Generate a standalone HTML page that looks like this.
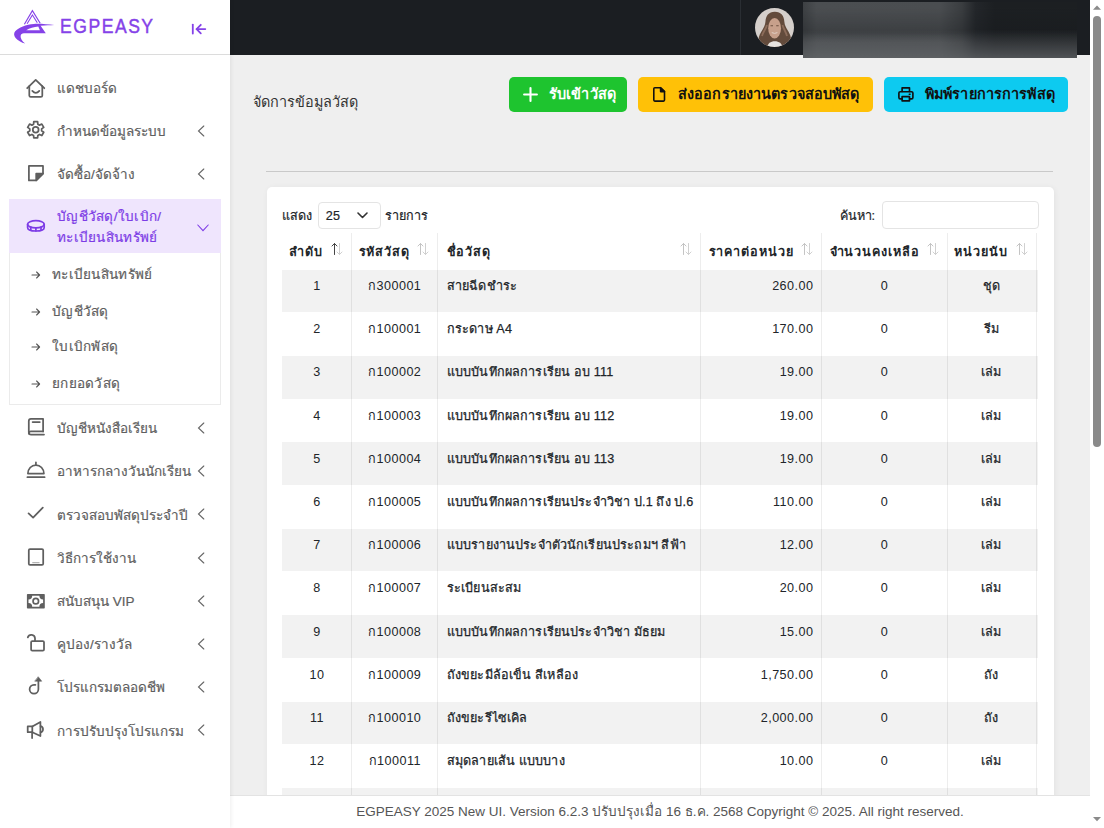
<!DOCTYPE html>
<html><head><meta charset="utf-8">
<style>
*{box-sizing:border-box;margin:0;padding:0}
html,body{width:1104px;height:828px;overflow:hidden}
body{position:relative;background:#efefef;font-family:"Liberation Sans",sans-serif;color:#212529}
.abs{position:absolute}
#sb{position:absolute;left:0;top:0;width:230px;height:828px;background:#fff;box-shadow:1px 0 4px rgba(0,0,0,0.07);z-index:2}
#sbh{position:absolute;left:0;top:0;width:230px;height:54.5px;border-bottom:1px solid #dcdcdc}
.logo-t{position:absolute;left:60.3px;top:12px;font-size:20.2px;line-height:28px;color:#8542e8;letter-spacing:1.75px;-webkit-text-stroke:0.45px #8542e8;transform:scaleX(0.87);transform-origin:0 0}
.mi{position:absolute;left:57px;font-size:13.5px;line-height:20px;color:#5f5f5f;white-space:nowrap;-webkit-text-stroke:0.2px currentColor}
.sub{position:absolute;left:52px;letter-spacing:0.3px;font-size:13.5px;line-height:20px;color:#5f5f5f;white-space:nowrap;-webkit-text-stroke:0.2px currentColor}
#top{position:absolute;left:230px;top:0;width:860px;height:54.5px;background:#1b1e22}
#foot{position:absolute;left:230px;top:795px;width:860px;height:33px;background:#fff;border-top:1px solid #e3e3e3;font-size:13.5px;color:#555;text-align:center;line-height:31px}
#scr{position:absolute;left:1090px;top:0;width:14px;height:828px;background:#fff}
.btn{position:absolute;top:77px;height:35px;border-radius:5px;font-size:14.4px;font-weight:bold;line-height:35px;white-space:nowrap;letter-spacing:0.12px}
#card{position:absolute;left:267px;top:186.6px;width:786.5px;height:620px;background:#fff;border-radius:5px;box-shadow:1px 1px 6px rgba(0,0,0,0.06)}
.th{position:absolute;font-size:12.6px;line-height:20px;font-weight:bold;color:#212529;white-space:nowrap;letter-spacing:0.9px}
.td{position:absolute;font-size:12.6px;line-height:20px;color:#212529;white-space:nowrap}
.lbl{font-size:12.6px;line-height:20px;color:#212529;white-space:nowrap;-webkit-text-stroke:0.2px #212529}
.td.c{text-align:center}.td.r{text-align:right}
.td.n{letter-spacing:0.45px}.td.t{letter-spacing:0.15px;-webkit-text-stroke:0.25px #212529}
</style></head><body>
<div id="sb">
<div id="sbh"></div>
<svg class="abs" style="left:0;top:0" width="60" height="54" viewBox="0 0 60 54">
<path d="M24.4 24.3L32.4 10.6 40.2 23.2" fill="none" stroke="#8542e8" stroke-width="1.15" stroke-linejoin="miter"/>
<path d="M27.1 23.7L32.4 14.9 37.3 22.8" fill="none" stroke="#8542e8" stroke-width="1.05" stroke-linejoin="miter"/>
<path fill-rule="evenodd" fill="#8542e8" d="M54.2 25.1C48 24.3 40 23.6 34 23.9C26 24.4 18.5 27.5 15.2 31.2C13.6 33 13.8 35.8 15.6 38C17.6 40.5 21.5 42.6 25.2 43.6C22 41 20.4 38.4 20.6 36C20.8 34.3 22 33.3 24 33.3H45.8L38.4 22.6 40.6 25.8C46 25.5 50 25.3 54.2 25.1ZM26.2 30.2C29.5 28.2 34 26.9 38.3 26.5L39.9 30.2Z"/>
</svg>
<div class="logo-t">EGPEASY</div>
<svg class="abs" style="left:190px;top:22px" width="18" height="14" viewBox="190 22 18 14" fill="none" stroke="#8542e8" stroke-width="1.8" stroke-linecap="round" stroke-linejoin="round"><path d="M192.8 24.6V33.6"/><path d="M196.6 29.1H205.3"/><path d="M200.8 24.8L196.6 29.1 200.8 33.4"/></svg>
<div class="abs" style="left:9px;top:199px;width:212px;height:205.5px;border:1px solid #ebebeb;border-top:none"></div>
<div class="abs" style="left:9px;top:199px;width:212px;height:54px;background:#efe5fd"></div>
<svg class="abs" style="left:22px;top:212px" width="28" height="28" viewBox="22 212 28 28" fill="none" stroke="#7d3ce6" stroke-width="1.7" stroke-linecap="round" stroke-linejoin="round"><path d="M27.6 224.3A8.3 3.6 0 0 1 44.2 224.3A8.3 3.6 0 0 1 27.6 224.3Z"/><path d="M27.6 224.3V227.4Q27.6 231 35.9 231Q44.2 231 44.2 227.4V224.3"/><path d="M30.8 227.2V230.2M35.9 227.9V231M41 227.2V230.2"/></svg>
<div class="mi" style="top:205.5px;color:#7d3ce6;line-height:21px;letter-spacing:0.3px">บัญชีวัสดุ/ใบเบิก/<br>ทะเบียนสินทรัพย์</div>
<svg class="abs" style="left:196px;top:222px" width="14" height="12" viewBox="196 222 14 12" fill="none" stroke="#7d3ce6" stroke-width="1.1" stroke-linecap="round"><path d="M197.8 225L203 230.6 208.2 225"/></svg>
<svg class="abs" style="left:22px;top:74px" width="28" height="28" viewBox="22 74 28 28" fill="none" stroke="#5f5f5f" stroke-width="1.75" stroke-linecap="round" stroke-linejoin="round"><path d="M27.2 88.2L35.7 79.9 44.3 88.2"/><path d="M29.3 86.2V95.4Q29.3 96.9 30.8 96.9H40.8Q42.3 96.9 42.3 95.4V86.2"/><path d="M32.3 90.9Q35.8 94.9 39.3 90.9"/></svg>
<div class="mi" style="top:79.0px">แดชบอร์ด</div>
<svg class="abs" style="left:22px;top:116px" width="28" height="28" viewBox="22 116 28 28" fill="none" stroke="#5f5f5f" stroke-width="1.75" stroke-linecap="round" stroke-linejoin="round"><path d="M33.55 124.20 L33.81 121.62 L37.59 121.62 L37.85 124.20 L39.48 125.14 L41.84 124.07 L43.73 127.34 L41.63 128.86 L41.63 130.74 L43.73 132.26 L41.84 135.53 L39.48 134.46 L37.85 135.40 L37.59 137.98 L33.81 137.98 L33.55 135.40 L31.92 134.46 L29.56 135.53 L27.67 132.26 L29.77 130.74 L29.77 128.86 L27.67 127.34 L29.56 124.07 L31.92 125.14Z"/><circle cx="35.7" cy="129.8" r="2.9"/></svg>
<div class="mi" style="top:122.2px">กำหนดข้อมูลระบบ</div>
<svg class="abs" style="left:194px;top:123.0px" width="14" height="16" viewBox="194 123.0 14 16" fill="none" stroke="#666" stroke-width="1.1" stroke-linecap="round"><path d="M203.8 126.0L198.5 131.0 203.8 136.0"/></svg>
<svg class="abs" style="left:22px;top:159px" width="28" height="28" viewBox="22 159 28 28" fill="none" stroke="#5f5f5f" stroke-width="1.75" stroke-linecap="round" stroke-linejoin="round"><path d="M28.9 165.9H43V173.6L36.2 180.4H28.9Z"/><path d="M36.2 173.6H43L36.2 180.4Z" fill="#5f5f5f"/></svg>
<div class="mi" style="top:165.4px">จัดซื้อ/จัดจ้าง</div>
<svg class="abs" style="left:194px;top:166.2px" width="14" height="16" viewBox="194 166.2 14 16" fill="none" stroke="#666" stroke-width="1.1" stroke-linecap="round"><path d="M203.8 169.2L198.5 174.2 203.8 179.2"/></svg>
<svg class="abs" style="left:22px;top:412px" width="28" height="28" viewBox="22 412 28 28" fill="none" stroke="#5f5f5f" stroke-width="1.75" stroke-linecap="round" stroke-linejoin="round"><path d="M43.1 431.4V418.8H31Q28.8 418.8 28.8 421V432.2Q28.8 434.6 31.2 434.6H44"/><path d="M28.8 433.6Q28.8 431.4 31 431.4H43.1"/><path d="M32.6 422.1H39.8"/></svg>
<div class="mi" style="top:419.2px">บัญชีหนังสือเรียน</div>
<svg class="abs" style="left:194px;top:420.0px" width="14" height="16" viewBox="194 420.0 14 16" fill="none" stroke="#666" stroke-width="1.1" stroke-linecap="round"><path d="M203.8 423.0L198.5 428.0 203.8 433.0"/></svg>
<svg class="abs" style="left:22px;top:456px" width="28" height="28" viewBox="22 456 28 28" fill="none" stroke="#5f5f5f" stroke-width="1.75" stroke-linecap="round" stroke-linejoin="round"><path d="M27.9 473.6A8 8.6 0 0 1 43.9 473.6Z"/><path d="M35.9 462.4V464.8"/><path d="M27.4 477.2H44.6"/></svg>
<div class="mi" style="top:462.4px">อาหารกลางวันนักเรียน</div>
<svg class="abs" style="left:194px;top:463.2px" width="14" height="16" viewBox="194 463.2 14 16" fill="none" stroke="#666" stroke-width="1.1" stroke-linecap="round"><path d="M203.8 466.2L198.5 471.2 203.8 476.2"/></svg>
<svg class="abs" style="left:22px;top:498px" width="28" height="28" viewBox="22 498 28 28" fill="none" stroke="#5f5f5f" stroke-width="1.75" stroke-linecap="round" stroke-linejoin="round"><path d="M28.6 513.4L33.1 517.6 42.8 507.6"/></svg>
<div class="mi" style="top:505.6px">ตรวจสอบพัสดุประจำปี</div>
<svg class="abs" style="left:194px;top:506.4px" width="14" height="16" viewBox="194 506.4 14 16" fill="none" stroke="#666" stroke-width="1.1" stroke-linecap="round"><path d="M203.8 509.4L198.5 514.4 203.8 519.4"/></svg>
<svg class="abs" style="left:22px;top:543px" width="28" height="28" viewBox="22 543 28 28" fill="none" stroke="#5f5f5f" stroke-width="1.75" stroke-linecap="round" stroke-linejoin="round"><rect x="28.8" y="549" width="14.4" height="15.9" rx="1.2"/><path d="M32.8 562.7H39" stroke="#b5b5b5" stroke-width="1.3"/></svg>
<div class="mi" style="top:548.8px">วิธีการใช้งาน</div>
<svg class="abs" style="left:194px;top:549.6px" width="14" height="16" viewBox="194 549.6 14 16" fill="none" stroke="#666" stroke-width="1.1" stroke-linecap="round"><path d="M203.8 552.6L198.5 557.6 203.8 562.6"/></svg>
<svg class="abs" style="left:22px;top:587px" width="28" height="28" viewBox="22 587 28 28" fill="none" stroke="#5f5f5f" stroke-width="1.75" stroke-linecap="round" stroke-linejoin="round"><rect x="26.9" y="593.9" width="17.9" height="14.7" rx="0.8" fill="#5f5f5f" stroke="none"/><path d="M32.2 595.7H39.4A3.7 3.7 0 0 0 43.1 599.4V603A3.7 3.7 0 0 0 39.4 606.8H32.2A3.7 3.7 0 0 0 28.5 603V599.4A3.7 3.7 0 0 0 32.2 595.7Z" fill="#fff" stroke="none"/><circle cx="35.8" cy="601.2" r="2.75" stroke-width="1.7"/></svg>
<div class="mi" style="top:592.0px">สนับสนุน VIP</div>
<svg class="abs" style="left:194px;top:592.8px" width="14" height="16" viewBox="194 592.8 14 16" fill="none" stroke="#666" stroke-width="1.1" stroke-linecap="round"><path d="M203.8 595.8L198.5 600.8 203.8 605.8"/></svg>
<svg class="abs" style="left:22px;top:629px" width="28" height="28" viewBox="22 629 28 28" fill="none" stroke="#5f5f5f" stroke-width="1.75" stroke-linecap="round" stroke-linejoin="round"><rect x="31.1" y="641" width="12.9" height="9.7" rx="1.2"/><path d="M35 641V638.3A3.7 3.7 0 0 0 27.8 637.4"/></svg>
<div class="mi" style="top:635.2px">คูปอง/รางวัล</div>
<svg class="abs" style="left:194px;top:636.0px" width="14" height="16" viewBox="194 636.0 14 16" fill="none" stroke="#666" stroke-width="1.1" stroke-linecap="round"><path d="M203.8 639.0L198.5 644.0 203.8 649.0"/></svg>
<svg class="abs" style="left:22px;top:672px" width="28" height="28" viewBox="22 672 28 28" fill="none" stroke="#5f5f5f" stroke-width="1.75" stroke-linecap="round" stroke-linejoin="round"><path d="M35.4 684.8H34A4.4 4.4 0 1 0 38.4 689.2V680.5"/><path d="M38.4 677L41.7 681.2H35.1Z" fill="#5f5f5f" stroke-width="0.6"/></svg>
<div class="mi" style="top:678.4px">โปรแกรมตลอดชีพ</div>
<svg class="abs" style="left:194px;top:679.2px" width="14" height="16" viewBox="194 679.2 14 16" fill="none" stroke="#666" stroke-width="1.1" stroke-linecap="round"><path d="M203.8 682.2L198.5 687.2 203.8 692.2"/></svg>
<svg class="abs" style="left:22px;top:716px" width="28" height="28" viewBox="22 716 28 28" fill="none" stroke="#5f5f5f" stroke-width="1.75" stroke-linecap="round" stroke-linejoin="round"><path d="M27.7 726.4H32.3V732.2H27.7Z"/><path d="M32.3 726.4L40.4 721.9V736L32.3 732.2"/><path d="M32.1 732.6V738"/><path d="M40.6 726.2A3.2 3.2 0 0 1 40.6 732.4"/></svg>
<div class="mi" style="top:721.6px">การปรับปรุงโปรแกรม</div>
<svg class="abs" style="left:194px;top:722.4px" width="14" height="16" viewBox="194 722.4 14 16" fill="none" stroke="#666" stroke-width="1.1" stroke-linecap="round"><path d="M203.8 725.4L198.5 730.4 203.8 735.4"/></svg>
<svg class="abs" style="left:28px;top:269.2px" width="14" height="12" viewBox="28 269.2 14 12" fill="none" stroke="#555" stroke-width="1.1" stroke-linecap="round" stroke-linejoin="round"><path d="M32 275.2H39.5M36.6 272.2L39.6 275.2 36.6 278.2"/></svg>
<div class="sub" style="top:265.2px">ทะเบียนสินทรัพย์</div>
<svg class="abs" style="left:28px;top:305.5px" width="14" height="12" viewBox="28 305.5 14 12" fill="none" stroke="#555" stroke-width="1.1" stroke-linecap="round" stroke-linejoin="round"><path d="M32 311.5H39.5M36.6 308.5L39.6 311.5 36.6 314.5"/></svg>
<div class="sub" style="top:301.5px">บัญชีวัสดุ</div>
<svg class="abs" style="left:28px;top:341.4px" width="14" height="12" viewBox="28 341.4 14 12" fill="none" stroke="#555" stroke-width="1.1" stroke-linecap="round" stroke-linejoin="round"><path d="M32 347.4H39.5M36.6 344.4L39.6 347.4 36.6 350.4"/></svg>
<div class="sub" style="top:337.4px">ใบเบิกพัสดุ</div>
<svg class="abs" style="left:28px;top:377.6px" width="14" height="12" viewBox="28 377.6 14 12" fill="none" stroke="#555" stroke-width="1.1" stroke-linecap="round" stroke-linejoin="round"><path d="M32 383.6H39.5M36.6 380.6L39.6 383.6 36.6 386.6"/></svg>
<div class="sub" style="top:373.6px">ยกยอดวัสดุ</div>
</div>
<div id="top">
<div class="abs" style="left:510px;top:0;width:1px;height:54.5px;background:#2a2e33"></div>
<div class="abs" style="left:525.2px;top:8.2px;width:39px;height:39px;border-radius:50%;overflow:hidden"><svg class="abs" style="left:0;top:0" width="39" height="39" viewBox="0 0 39 39">
<g>
<rect width="39" height="39" fill="#d5cfcb"/>
<g>
<path d="M19.8 3.8C13.5 3.8 10.8 8 10.4 14C10 20 5.2 23.5 3.8 29.5C3 34.5 5.5 39 10 39H30C34 39 36.8 35 35.8 29.5C34.8 23.5 29.8 20 29.4 14C29 8 26.3 3.8 19.8 3.8Z" fill="#634b3c"/>
<path d="M7 28C8 24 11 21 12 17M32 28C31 24 28.5 21 27.5 17" stroke="#8c6c5a" stroke-width="1.8" fill="none"/>
<ellipse cx="19.6" cy="20.3" rx="6.4" ry="10.2" fill="#c7a08b"/>
<path d="M15.5 17.8H18M21.2 17.8H23.7" stroke="#6e5040" stroke-width="1.1"/>
<path d="M16.8 24.6Q19.6 26.2 22.4 24.6" stroke="#e2cfc4" stroke-width="1" fill="none"/>
<path d="M12.5 39C12.5 35.5 15.5 33.2 19.8 33.2C24 33.2 27.2 35.5 27.2 39Z" fill="#e7e3e0"/>
</g></g></svg></div>
<div class="abs" style="left:573px;top:2.2px;width:274px;height:56.2px;background:linear-gradient(180deg,rgba(100,103,106,0) 50%,rgba(100,103,106,0.72) 100%),linear-gradient(180deg,rgba(20,23,26,0) 10%,rgba(20,23,26,0.28) 55%,rgba(20,23,26,0) 72%),linear-gradient(90deg,#3d4043 0%,#4b4e51 5%,#4a4d50 50%,#3a3d40 58%,#23262a 63%,#1c1f22 70%,#1c1f22 100%)">
</div>
</div>
<div class="abs" style="left:253px;top:89.5px;font-size:14.4px;line-height:24px;color:#333;white-space:nowrap">จัดการข้อมูลวัสดุ</div>
<div class="btn" style="left:509px;width:117.5px;background:#1ec42f;color:#fff">
<svg class="abs" style="left:12px;top:8px" width="19" height="19" viewBox="521 85 19 19" stroke="#fff" stroke-width="2.1" stroke-linecap="round"><path d="M530.5 88.1V100.9M524.1 94.5H536.9"/></svg>
<span class="abs" style="left:40px;top:0">รับเข้าวัสดุ</span></div>
<div class="btn" style="left:638px;width:234.5px;background:#ffc107;color:#111">
<svg class="abs" style="left:12px;top:8px" width="19" height="19" viewBox="650 85 19 19" fill="none" stroke="#111" stroke-width="1.6" stroke-linejoin="round"><path d="M654.8 87.7H660.6L664.5 91.6V100.1Q664.5 101.1 663.5 101.1H654.8Q653.8 101.1 653.8 100.1V88.7Q653.8 87.7 654.8 87.7Z"/><path d="M660.6 87.7V91.6H664.5Z" fill="#111"/></svg>
<span class="abs" style="left:40px;top:0">ส่งออกรายงานตรวจสอบพัสดุ</span></div>
<div class="btn" style="left:884px;width:184px;background:#0dcaf0;color:#111">
<svg class="abs" style="left:11px;top:8px" width="20" height="19" viewBox="895 85 20 19" fill="none" stroke="#111" stroke-width="1.65" stroke-linecap="round" stroke-linejoin="round"><path d="M902.1 91.5V87.8H909.5V91.5"/><path d="M902 98.9H900.3Q898.9 98.9 898.9 97.5V93.1Q898.9 91.7 900.3 91.7H911.5Q912.9 91.7 912.9 93.1V97.5Q912.9 98.9 911.5 98.9H909.6"/><path d="M902.1 96.6H909.5V100.9H902.1Z"/><path d="M909.2 94.2H910.1" stroke-width="1.4"/></svg>
<span class="abs" style="left:41px;top:0">พิมพ์รายการการพัสดุ</span></div>
<div class="abs" style="left:266px;top:171px;width:787px;height:1px;background:#c9c9c9"></div>
<div id="card"></div>
<div class="abs lbl" style="left:281.5px;top:205.5px">แสดง</div>
<div class="abs" style="left:317.5px;top:201.5px;width:63.5px;height:27px;border:1px solid #e4e4e4;border-radius:4px;background:#fff"></div>
<div class="abs lbl" style="left:325.8px;top:205.5px;letter-spacing:0.3px">25</div>
<svg class="abs" style="left:357px;top:212px" width="11" height="7" viewBox="0 0 11 7" fill="none" stroke="#333" stroke-width="1.6" stroke-linecap="round" stroke-linejoin="round"><path d="M1 1l4.5 4.5L10 1"/></svg>
<div class="abs lbl" style="left:385px;top:205.5px">รายการ</div>
<div class="abs lbl" style="left:839.5px;top:205.5px">ค้นหา:</div>
<div class="abs" style="left:882px;top:201px;width:156.5px;height:27.5px;border:1px solid #e4e4e4;border-radius:4px;background:#fff"></div>

<div class="abs" style="left:0;top:0;width:1104px;height:795px;overflow:hidden">
<div class="abs" style="left:282px;top:269.50px;width:756px;height:42.7px;background:#f2f2f2"></div>
<div class="abs" style="left:282px;top:355.90px;width:756px;height:42.7px;background:#f2f2f2"></div>
<div class="abs" style="left:282px;top:442.30px;width:756px;height:42.7px;background:#f2f2f2"></div>
<div class="abs" style="left:282px;top:528.70px;width:756px;height:42.7px;background:#f2f2f2"></div>
<div class="abs" style="left:282px;top:615.10px;width:756px;height:42.7px;background:#f2f2f2"></div>
<div class="abs" style="left:282px;top:701.50px;width:756px;height:42.7px;background:#f2f2f2"></div>
<div class="abs" style="left:282px;top:787.90px;width:756px;height:42.7px;background:#f2f2f2"></div>
<div class="abs" style="left:351.3px;top:233.3px;width:1px;height:562px;background:rgba(0,0,0,0.07)"></div>
<div class="abs" style="left:437.2px;top:233.3px;width:1px;height:562px;background:rgba(0,0,0,0.07)"></div>
<div class="abs" style="left:700.0px;top:233.3px;width:1px;height:562px;background:rgba(0,0,0,0.07)"></div>
<div class="abs" style="left:821.4px;top:233.3px;width:1px;height:562px;background:rgba(0,0,0,0.07)"></div>
<div class="abs" style="left:946.6px;top:233.3px;width:1px;height:562px;background:rgba(0,0,0,0.07)"></div>
<div class="abs" style="left:1036.0px;top:233.3px;width:1px;height:562px;background:rgba(0,0,0,0.07)"></div>
<div class="th" style="left:289.3px;top:241.5px">ลำดับ</div>
<svg class="abs" style="left:331.3px;top:242px" width="12" height="14" viewBox="0 0 12 14" fill="none" stroke-width="1" stroke-linecap="round" stroke-linejoin="round"><path d="M3.5 12.5V1.5M1 4l2.5-2.5L6 4" stroke="#444"/><path d="M8.5 1.5v11M6 10l2.5 2.5L11 10" stroke="#d0d0d0"/></svg>
<div class="th" style="left:358.6px;top:241.5px">รหัสวัสดุ</div>
<svg class="abs" style="left:417.2px;top:242px" width="12" height="14" viewBox="0 0 12 14" fill="none" stroke-width="1" stroke-linecap="round" stroke-linejoin="round"><path d="M3.5 12.5V1.5M1 4l2.5-2.5L6 4" stroke="#c4c4c4"/><path d="M8.5 1.5v11M6 10l2.5 2.5L11 10" stroke="#d0d0d0"/></svg>
<div class="th" style="left:446.5px;top:241.5px">ชื่อวัสดุ</div>
<svg class="abs" style="left:680.0px;top:242px" width="12" height="14" viewBox="0 0 12 14" fill="none" stroke-width="1" stroke-linecap="round" stroke-linejoin="round"><path d="M3.5 12.5V1.5M1 4l2.5-2.5L6 4" stroke="#c4c4c4"/><path d="M8.5 1.5v11M6 10l2.5 2.5L11 10" stroke="#d0d0d0"/></svg>
<div class="th" style="left:708.6px;top:241.5px">ราคาต่อหน่วย</div>
<svg class="abs" style="left:801.4px;top:242px" width="12" height="14" viewBox="0 0 12 14" fill="none" stroke-width="1" stroke-linecap="round" stroke-linejoin="round"><path d="M3.5 12.5V1.5M1 4l2.5-2.5L6 4" stroke="#c4c4c4"/><path d="M8.5 1.5v11M6 10l2.5 2.5L11 10" stroke="#d0d0d0"/></svg>
<div class="th" style="left:829.5px;top:241.5px">จำนวนคงเหลือ</div>
<svg class="abs" style="left:926.6px;top:242px" width="12" height="14" viewBox="0 0 12 14" fill="none" stroke-width="1" stroke-linecap="round" stroke-linejoin="round"><path d="M3.5 12.5V1.5M1 4l2.5-2.5L6 4" stroke="#c4c4c4"/><path d="M8.5 1.5v11M6 10l2.5 2.5L11 10" stroke="#d0d0d0"/></svg>
<div class="th" style="left:954.4px;top:241.5px">หน่วยนับ</div>
<svg class="abs" style="left:1016.0px;top:242px" width="12" height="14" viewBox="0 0 12 14" fill="none" stroke-width="1" stroke-linecap="round" stroke-linejoin="round"><path d="M3.5 12.5V1.5M1 4l2.5-2.5L6 4" stroke="#c4c4c4"/><path d="M8.5 1.5v11M6 10l2.5 2.5L11 10" stroke="#d0d0d0"/></svg>
<div class="td c n" style="left:282.4px;width:69.3px;top:275.9px">1</div>
<div class="td c n" style="left:351.8px;width:85.9px;top:275.9px">ก300001</div>
<div class="td t" style="left:446.8px;top:275.9px">สายฉีดชำระ</div>
<div class="td r n" style="left:700.0px;width:113.4px;top:275.9px">260.00</div>
<div class="td c n" style="left:821.9px;width:125.2px;top:275.9px">0</div>
<div class="td c t" style="left:946.6px;width:89.4px;top:275.9px">ชุด</div>
<div class="td c n" style="left:282.4px;width:69.3px;top:319.1px">2</div>
<div class="td c n" style="left:351.8px;width:85.9px;top:319.1px">ก100001</div>
<div class="td t" style="left:446.8px;top:319.1px">กระดาษ A4</div>
<div class="td r n" style="left:700.0px;width:113.4px;top:319.1px">170.00</div>
<div class="td c n" style="left:821.9px;width:125.2px;top:319.1px">0</div>
<div class="td c t" style="left:946.6px;width:89.4px;top:319.1px">รีม</div>
<div class="td c n" style="left:282.4px;width:69.3px;top:362.3px">3</div>
<div class="td c n" style="left:351.8px;width:85.9px;top:362.3px">ก100002</div>
<div class="td t" style="left:446.8px;top:362.3px">แบบบันทึกผลการเรียน อบ 111</div>
<div class="td r n" style="left:700.0px;width:113.4px;top:362.3px">19.00</div>
<div class="td c n" style="left:821.9px;width:125.2px;top:362.3px">0</div>
<div class="td c t" style="left:946.6px;width:89.4px;top:362.3px">เล่ม</div>
<div class="td c n" style="left:282.4px;width:69.3px;top:405.5px">4</div>
<div class="td c n" style="left:351.8px;width:85.9px;top:405.5px">ก100003</div>
<div class="td t" style="left:446.8px;top:405.5px">แบบบันทึกผลการเรียน อบ 112</div>
<div class="td r n" style="left:700.0px;width:113.4px;top:405.5px">19.00</div>
<div class="td c n" style="left:821.9px;width:125.2px;top:405.5px">0</div>
<div class="td c t" style="left:946.6px;width:89.4px;top:405.5px">เล่ม</div>
<div class="td c n" style="left:282.4px;width:69.3px;top:448.7px">5</div>
<div class="td c n" style="left:351.8px;width:85.9px;top:448.7px">ก100004</div>
<div class="td t" style="left:446.8px;top:448.7px">แบบบันทึกผลการเรียน อบ 113</div>
<div class="td r n" style="left:700.0px;width:113.4px;top:448.7px">19.00</div>
<div class="td c n" style="left:821.9px;width:125.2px;top:448.7px">0</div>
<div class="td c t" style="left:946.6px;width:89.4px;top:448.7px">เล่ม</div>
<div class="td c n" style="left:282.4px;width:69.3px;top:491.9px">6</div>
<div class="td c n" style="left:351.8px;width:85.9px;top:491.9px">ก100005</div>
<div class="td t" style="left:446.8px;top:491.9px">แบบบันทึกผลการเรียนประจำวิชา ป.1 ถึง ป.6</div>
<div class="td r n" style="left:700.0px;width:113.4px;top:491.9px">110.00</div>
<div class="td c n" style="left:821.9px;width:125.2px;top:491.9px">0</div>
<div class="td c t" style="left:946.6px;width:89.4px;top:491.9px">เล่ม</div>
<div class="td c n" style="left:282.4px;width:69.3px;top:535.1px">7</div>
<div class="td c n" style="left:351.8px;width:85.9px;top:535.1px">ก100006</div>
<div class="td t" style="left:446.8px;top:535.1px">แบบรายงานประจำตัวนักเรียนประถมฯ สีฟ้า</div>
<div class="td r n" style="left:700.0px;width:113.4px;top:535.1px">12.00</div>
<div class="td c n" style="left:821.9px;width:125.2px;top:535.1px">0</div>
<div class="td c t" style="left:946.6px;width:89.4px;top:535.1px">เล่ม</div>
<div class="td c n" style="left:282.4px;width:69.3px;top:578.3px">8</div>
<div class="td c n" style="left:351.8px;width:85.9px;top:578.3px">ก100007</div>
<div class="td t" style="left:446.8px;top:578.3px">ระเบียนสะสม</div>
<div class="td r n" style="left:700.0px;width:113.4px;top:578.3px">20.00</div>
<div class="td c n" style="left:821.9px;width:125.2px;top:578.3px">0</div>
<div class="td c t" style="left:946.6px;width:89.4px;top:578.3px">เล่ม</div>
<div class="td c n" style="left:282.4px;width:69.3px;top:621.5px">9</div>
<div class="td c n" style="left:351.8px;width:85.9px;top:621.5px">ก100008</div>
<div class="td t" style="left:446.8px;top:621.5px">แบบบันทึกผลการเรียนประจำวิชา มัธยม</div>
<div class="td r n" style="left:700.0px;width:113.4px;top:621.5px">15.00</div>
<div class="td c n" style="left:821.9px;width:125.2px;top:621.5px">0</div>
<div class="td c t" style="left:946.6px;width:89.4px;top:621.5px">เล่ม</div>
<div class="td c n" style="left:282.4px;width:69.3px;top:664.7px">10</div>
<div class="td c n" style="left:351.8px;width:85.9px;top:664.7px">ก100009</div>
<div class="td t" style="left:446.8px;top:664.7px">ถังขยะมีล้อเข็น สีเหลือง</div>
<div class="td r n" style="left:700.0px;width:113.4px;top:664.7px">1,750.00</div>
<div class="td c n" style="left:821.9px;width:125.2px;top:664.7px">0</div>
<div class="td c t" style="left:946.6px;width:89.4px;top:664.7px">ถัง</div>
<div class="td c n" style="left:282.4px;width:69.3px;top:707.9px">11</div>
<div class="td c n" style="left:351.8px;width:85.9px;top:707.9px">ก100010</div>
<div class="td t" style="left:446.8px;top:707.9px">ถังขยะรีไซเคิล</div>
<div class="td r n" style="left:700.0px;width:113.4px;top:707.9px">2,000.00</div>
<div class="td c n" style="left:821.9px;width:125.2px;top:707.9px">0</div>
<div class="td c t" style="left:946.6px;width:89.4px;top:707.9px">ถัง</div>
<div class="td c n" style="left:282.4px;width:69.3px;top:751.1px">12</div>
<div class="td c n" style="left:351.8px;width:85.9px;top:751.1px">ก100011</div>
<div class="td t" style="left:446.8px;top:751.1px">สมุดลายเส้น แบบบาง</div>
<div class="td r n" style="left:700.0px;width:113.4px;top:751.1px">10.00</div>
<div class="td c n" style="left:821.9px;width:125.2px;top:751.1px">0</div>
<div class="td c t" style="left:946.6px;width:89.4px;top:751.1px">เล่ม</div>
</div>
<div id="foot">EGPEASY 2025 New UI. Version 6.2.3 ปรับปรุงเมื่อ 16 ธ.ค. 2568 Copyright © 2025. All right reserved.</div>
<div id="scr">
<svg class="abs" style="left:0;top:0" width="14" height="828" viewBox="1090 0 14 828"><path d="M1093 9.7L1097 5.5 1101 9.7Z" fill="#8a8a8a"/><path d="M1093 817L1097 821.3 1101 817Z" fill="#8a8a8a"/></svg>
<div class="abs" style="left:3px;top:16px;width:8px;height:430.5px;border-radius:4px;background:#8a8a8a"></div>
</div>
</body></html>
